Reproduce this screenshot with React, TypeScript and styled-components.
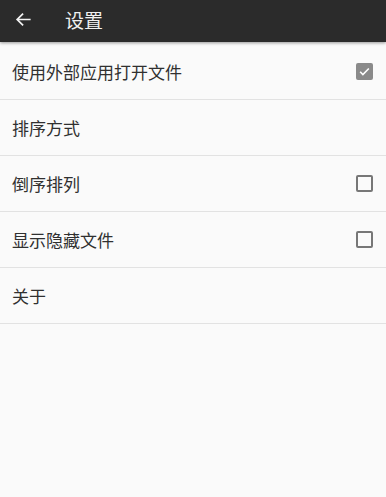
import React from "react";
import styled, { createGlobalStyle } from "styled-components";

const Global = createGlobalStyle`
  html, body { margin: 0; padding: 0; background: #fafafa; }
  body { font-family: Roboto, "Noto Sans CJK SC", sans-serif; }
`;

const Page = styled.div`
  width: 386px;
  height: 497px;
  background: #fafafa;
  display: flex;
  flex-direction: column;
`;

const Toolbar = styled.header`
  height: 42px;
  box-sizing: border-box;
  padding-bottom: 4px;
  margin-bottom: 2px;
  flex-shrink: 0;
  background: #2b2b2b;
  display: flex;
  align-items: center;
  box-shadow: 0 1px 3px rgba(0, 0, 0, 0.4);
  position: relative;
  z-index: 1;
`;

const BackButton = styled.div`
  width: 47px;
  height: 38px;
  display: flex;
  align-items: center;
  justify-content: center;
`;

const Title = styled.h1`
  margin: 0 0 0 18px;
  font-size: 19px;
  font-weight: 400;
  color: #f0f0f0;
  font-family: "Noto Sans CJK SC", sans-serif;
`;

const List = styled.div`
  display: flex;
  flex-direction: column;
`;

const Row = styled.div`
  height: 55px;
  flex-shrink: 0;
  border-bottom: 1px solid #e2e2e2;
  display: flex;
  align-items: center;
  justify-content: space-between;
  padding: 0 13px 0 12px;
`;

const Label = styled.span`
  font-family: "Noto Sans CJK SC", sans-serif;
  font-size: 17px;
  color: #303030;
`;

const Box = styled.div<{ $checked?: boolean }>`
  width: 17px;
  height: 17px;
  box-sizing: border-box;
  border-radius: 2px;
  border: 2px solid ${(p) => (p.$checked ? "#8a8a8a" : "#777")};
  background: ${(p) => (p.$checked ? "#8a8a8a" : "transparent")};
  display: flex;
  align-items: center;
  justify-content: center;
`;

const Check = ({ checked }: { checked?: boolean }) => (
  <Box $checked={checked}>
    {checked && (
      <svg width="13" height="13" viewBox="0 0 24 24">
        <path d="M4 12.5l5 5L20 6.5" fill="none" stroke="#fff" strokeWidth="3" />
      </svg>
    )}
  </Box>
);

const items: { label: string; check?: boolean; checked?: boolean }[] = [
  { label: "使用外部应用打开文件", check: true, checked: true },
  { label: "排序方式" },
  { label: "倒序排列", check: true },
  { label: "显示隐藏文件", check: true },
  { label: "关于" },
];

export default function App() {
  return (
    <Page>
      <Global />
      <Toolbar>
        <BackButton>
          <svg width="19" height="19" viewBox="0 0 24 24">
            <path d="M21 12H4M11.5 4.5L4 12l7.5 7.5" fill="none" stroke="#f2f2f2" strokeWidth="2.2" />
          </svg>
        </BackButton>
        <Title>设置</Title>
      </Toolbar>
      <List>
        {items.map((it) => (
          <Row key={it.label}>
            <Label>{it.label}</Label>
            {it.check && <Check checked={it.checked} />}
          </Row>
        ))}
      </List>
    </Page>
  );
}
